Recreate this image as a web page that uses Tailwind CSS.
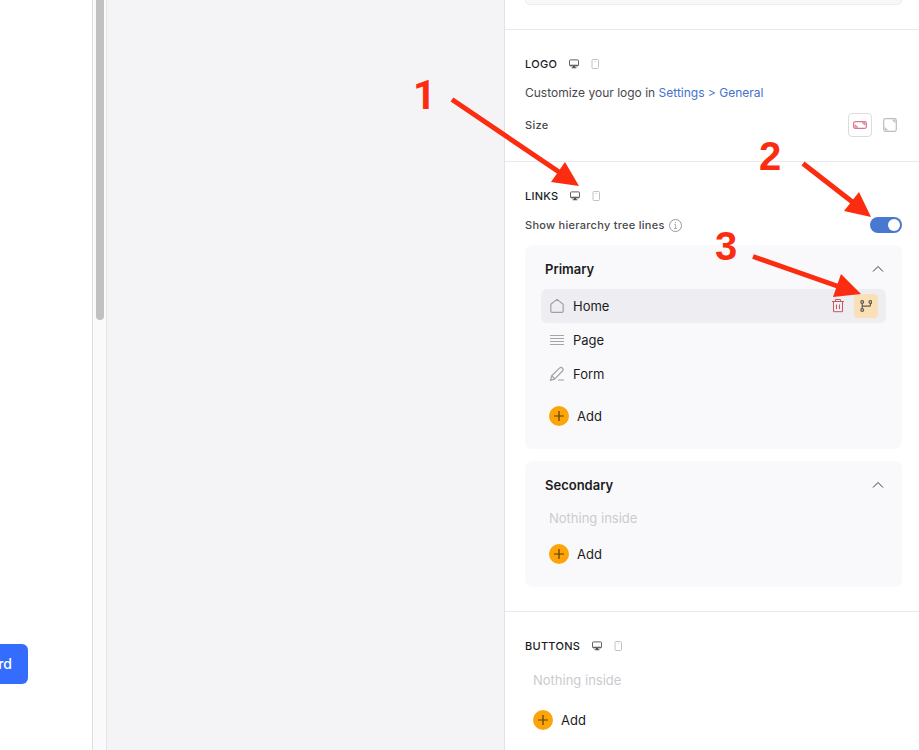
<!DOCTYPE html>
<html lang="en">
<head>
    <meta charset="UTF-8">
    <meta name="viewport" content="width=device-width, initial-scale=1.0">
    <title>Header settings</title>
    <script src="https://cdn.jsdelivr.net/npm/@tailwindcss/browser@4"></script>
</head>
<body class="relative flex h-screen overflow-hidden bg-white font-['Inter',sans-serif] text-[13px] leading-5 text-[#1c1c1f]">

    <!-- Icons shared by several rows -->
    <svg class="hidden" aria-hidden="true">
        <symbol id="desktop" viewBox="0 0 10 10">
            <rect x="0.5" y="0.9" width="9" height="6" rx="1" fill="none" stroke="currentColor" stroke-width=".9"/>
            <path d="M1 5.800h8v1H1zM4 7h2v1.500H4zM2.600 8.300h4.800v.9H2.600z" fill="currentColor"/>
        </symbol>
        <symbol id="mobile" viewBox="0 0 8 10">
            <rect x="1" y="0.5" width="6.500" height="9" rx="1" fill="none" stroke="currentColor"/>
            <path d="M3.700 2h1v1h-1z" fill="currentColor"/>
        </symbol>
        <symbol id="plus" viewBox="0 0 20 20">
            <circle cx="10" cy="10" r="10" fill="#fca408"/>
            <path d="M5 10h10M10 5v10" stroke="#5c3c05" stroke-width="1.200"/>
        </symbol>
        <symbol id="chevron" viewBox="0 0 12 8">
            <path d="M1 6.500l5-5 5 5" fill="none" stroke="currentColor"/>
        </symbol>
    </svg>

    <!-- Page preview -->
    <div class="flex w-[93px] shrink-0 flex-col justify-end border-r border-[#dededf] pb-[66px]">
        <button class="flex h-10 w-7 items-center justify-end rounded-r-md bg-[#346dfe] pr-4 text-sm font-medium text-white">rd</button>
    </div>
    <div class="w-[14px] shrink-0 border-r border-[#e6e6e7] bg-[#fafafa] pl-[3px]">
        <div class="h-80 w-2 rounded-b-full bg-[#c1c1c1]"></div>
    </div>
    <main class="min-w-0 flex-1 bg-[#f4f4f6]"></main>

    <!-- Settings sidebar -->
    <aside class="w-[415px] shrink-0 overflow-hidden border-l border-[#e3e3e7] bg-white">
        <div class="border-b border-[#e9e9ec] pr-[17px] pb-6 pl-5">
            <div class="h-[5px] rounded-b-lg border-x border-b border-[#ececef] bg-[#f8f8fa]"></div>
        </div>

        <section class="border-b border-[#e9e9ec] py-6 pr-[17px] pl-5">
            <div class="flex h-5 items-center">
                <h2 class="text-[11px] font-medium tracking-wide">LOGO</h2>
                <button class="ml-3 text-[#505054]" aria-label="Desktop"><svg class="size-[10px]"><use href="#desktop"/></svg></button>
                <button class="ml-3 text-[#c2c2c5]" aria-label="Mobile"><svg class="h-[10px] w-2"><use href="#mobile"/></svg></button>
            </div>
            <p class="mt-2 text-xs leading-[22px] text-[#48484c]">Customize your logo in <a href="#" class="text-[#4272cd]">Settings &gt; General</a></p>
            <div class="mt-[9px] flex items-center">
                <span class="flex-1 text-[11px] font-medium tracking-wide text-[#48484c]">Size</span>
                <button class="flex size-6 items-center justify-center rounded-sm border border-[#dcdcdf]" aria-label="Wide logo">
                    <svg class="h-2 w-[14px]" viewBox="0 0 14 8" fill="none" stroke="#dc758b">
                        <rect x="0.600" y="0.600" width="12.800" height="6.800" rx="1.800" stroke-width="1.200"/>
                        <path d="M9 1.800h3v2.400zM2 3.800v2.400h3z" fill="#e59aaa" stroke-width=".6"/>
                    </svg>
                </button>
                <button class="-mr-[6px] flex h-6 w-9 items-center justify-center" aria-label="Square logo">
                    <svg class="size-[14px]" viewBox="0 0 14 14" fill="none" stroke="#bdbdbf">
                        <rect x="0.700" y="0.700" width="12.600" height="12.600" rx="1.800" stroke-width="1.200"/>
                        <path d="M9.500 2h2.500v2.500zM2 9.500v2.500h2.500z" fill="#d0d0d2" stroke-width=".7"/>
                    </svg>
                </button>
            </div>
        </section>

        <section class="border-b border-[#e9e9ec] py-6 pr-[17px] pl-5">
            <div class="flex h-5 items-center">
                <h2 class="text-[11px] font-medium tracking-wide">LINKS</h2>
                <button class="ml-3 text-[#505054]" aria-label="Desktop"><svg class="size-[10px]"><use href="#desktop"/></svg></button>
                <button class="ml-3 text-[#c2c2c5]" aria-label="Mobile"><svg class="h-[10px] w-2"><use href="#mobile"/></svg></button>
            </div>
            <div class="mt-2 flex h-[22px] items-center">
                <label for="tree-lines" class="text-[11px] font-medium tracking-wide text-[#48484c]">Show hierarchy tree lines</label>
                <svg class="ml-1 size-[13px]" viewBox="0 0 13 13" fill="none" stroke="#98989c">
                    <circle cx="6.500" cy="6.500" r="6"/>
                    <path d="M5.300 5.500h1.300v4M5 9.500h3" stroke-width=".8"/>
                    <circle cx="6.400" cy="3.600" r=".6" fill="#98989c" stroke="none"/>
                </svg>
                <input id="tree-lines" type="checkbox" checked class="ml-auto flex h-4 w-8 appearance-none items-center rounded-full bg-[#c8c8cc] px-[2px] before:size-3 before:rounded-full before:bg-white checked:justify-end checked:bg-[#4878d0]">
            </div>

            <div class="mt-[9px] rounded-lg bg-[#f9f9fb] px-4 pt-3 pb-4">
                <div class="flex h-6 items-center justify-between pl-1">
                    <h3 class="font-semibold">Primary</h3>
                    <button class="mr-[2px] text-[#39393d]" aria-label="Collapse Primary"><svg class="h-2 w-3"><use href="#chevron"/></svg></button>
                </div>
                <ul class="mt-2">
                    <li class="flex h-[34px] items-center rounded-md bg-[#eeeef2] px-2">
                        <svg class="size-4" viewBox="0 0 16 16" fill="none" stroke="#a0a0a5" stroke-width="1.200" stroke-linejoin="round">
                            <path d="M1.800 6.200L8 1.400l6.200 4.800v6.900a1.300 1.300 0 0 1-1.300 1.300H3.100a1.300 1.300 0 0 1-1.300-1.300z"/>
                        </svg>
                        <span class="ml-2 flex-1">Home</span>
                        <button class="mr-[10px]" aria-label="Delete Home">
                            <svg class="h-[14px] w-3" viewBox="0 0 12 14" fill="none" stroke="#c8585c">
                                <path d="M0 2.500h12M3.500 2.500V.5h5v2M1.500 2.500v10.200h9V2.500M4.500 5.500v4.500M7.500 5.500v4.500"/>
                            </svg>
                        </button>
                        <button class="flex size-6 items-center justify-center rounded-sm bg-[#fae0b7]" aria-label="Add child link">
                            <svg class="size-3" viewBox="0 0 12 12" fill="none" stroke="#625a50" stroke-width="1.200">
                                <circle cx="2.200" cy="2" r="1.400"/>
                                <circle cx="2.200" cy="10" r="1.400"/>
                                <circle cx="10.400" cy="2" r="1.400"/>
                                <path d="M2.200 3.400v5.200M10.400 3.400v1.800a1 1 0 0 1-1 1H2.200"/>
                            </svg>
                        </button>
                    </li>
                    <li class="flex h-[34px] items-center px-2">
                        <svg class="size-4" viewBox="0 0 16 16" stroke="#a4a4a9" stroke-width="1.200">
                            <path d="M1 3.500h14M1 6.500h14M1 9.500h14M1 12.500h14"/>
                        </svg>
                        <span class="ml-2">Page</span>
                    </li>
                    <li class="flex h-[34px] items-center px-2">
                        <svg class="size-4" viewBox="0 0 16 16" fill="none" stroke="#a0a0a5" stroke-width="1.200" stroke-linecap="round" stroke-linejoin="round">
                            <path d="M1.500 14.400l1.200-4.600 7.800-7.700a2 2 0 0 1 3 0 2 2 0 0 1 0 2.900l-7.600 7.900zM2.700 9.800l3.200 3.100M9.500 14h5"/>
                        </svg>
                        <span class="ml-2">Form</span>
                    </li>
                </ul>
                <button class="mt-2 flex h-[34px] items-center gap-2 px-2"><svg class="size-5"><use href="#plus"/></svg>Add</button>
            </div>

            <div class="mt-3 rounded-lg bg-[#f9f9fb] px-4 pt-3 pb-4">
                <div class="flex h-6 items-center justify-between pl-1">
                    <h3 class="font-semibold">Secondary</h3>
                    <button class="mr-[2px] text-[#39393d]" aria-label="Collapse Secondary"><svg class="h-2 w-3"><use href="#chevron"/></svg></button>
                </div>
                <p class="mt-1 px-2 leading-[34px] text-[#cbcbcf]">Nothing inside</p>
                <button class="mt-[2px] flex h-[34px] items-center gap-2 px-2"><svg class="size-5"><use href="#plus"/></svg>Add</button>
            </div>
        </section>

        <section class="py-6 pr-[17px] pl-5">
            <div class="flex h-5 items-center">
                <h2 class="text-[11px] font-medium tracking-wide">BUTTONS</h2>
                <button class="ml-3 text-[#505054]" aria-label="Desktop"><svg class="size-[10px]"><use href="#desktop"/></svg></button>
                <button class="ml-3 text-[#c2c2c5]" aria-label="Mobile"><svg class="h-[10px] w-2"><use href="#mobile"/></svg></button>
            </div>
            <p class="mt-[7px] px-2 leading-[34px] text-[#cbcbcf]">Nothing inside</p>
            <button class="mt-[6px] flex h-[34px] items-center gap-2 px-2"><svg class="size-5"><use href="#plus"/></svg>Add</button>
        </section>
    </aside>

    <!-- Numbered arrows over the sidebar -->
    <svg class="pointer-events-none absolute top-0 right-0 h-[310px] w-[519px] font-['Liberation_Sans',sans-serif] text-[40px] font-bold" viewBox="400 0 519 310" fill="#fb2c10">
        <g stroke="#fb2c10" stroke-width="5">
            <path d="M452 99.500L562 174M803 163.500L855 204M753 256.500L840 287"/>
        </g>
        <path d="M579 186l-14-24-14 20zM871 217l-12-25-15 19zM861 294l-20-20-8 23z"/>
        <text x="413" y="109" class="font-['Roboto',sans-serif]">1</text>
        <text x="759" y="170">2</text>
        <text x="715" y="260">3</text>
    </svg>
</body>
</html>
